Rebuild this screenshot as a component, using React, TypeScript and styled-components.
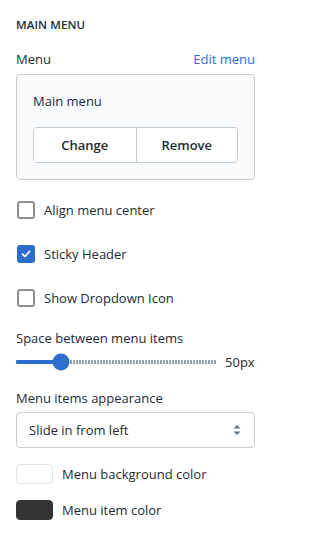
import React, { useState } from "react";
import styled, { createGlobalStyle } from "styled-components";

const GlobalStyle = createGlobalStyle`
  html, body {
    margin: 0;
    padding: 0;
    background: #ffffff;
  }
  body {
    font-family: "Open Sans", "Noto Sans", sans-serif;
    color: #212b36;
    -webkit-font-smoothing: antialiased;
  }
`;

const Panel = styled.div`
  width: 271px;
  box-sizing: border-box;
  padding: 17px 16px 16px;
  display: flex;
  flex-direction: column;
`;

const SectionTitle = styled.h3`
  margin: 0 0 16px;
  font-size: 11.5px;
  font-weight: 600;
  line-height: 16px;
  letter-spacing: 0.1px;
  text-transform: uppercase;
  color: #212b36;
`;

const FieldHeader = styled.div`
  display: flex;
  justify-content: space-between;
  align-items: center;
  height: 20px;
  margin-bottom: 5px;
`;

const Label = styled.span`
  font-size: 13px;
  line-height: 20px;
  color: #212b36;
`;

const LinkButton = styled.a`
  font-size: 13px;
  line-height: 20px;
  color: #2c6ecb;
  text-decoration: none;
  cursor: pointer;
`;

const Card = styled.div`
  background: #f9fafb;
  border: 1px solid #c9cccf;
  border-radius: 4px;
  padding: 16px;
  display: flex;
  flex-direction: column;
  gap: 16px;
`;

const CardTitle = styled.div`
  font-size: 13px;
  line-height: 20px;
`;

const ButtonGroup = styled.div`
  display: grid;
  grid-template-columns: 1fr 1fr;
  border: 1px solid #c4cdd5;
  border-radius: 4px;
  background: #ffffff;
  overflow: hidden;
`;

const GroupButton = styled.button<{ $divider?: boolean }>`
  height: 34px;
  border: 0;
  border-left: ${(p) => (p.$divider ? "1px solid #c4cdd5" : "0")};
  background: #ffffff;
  font-family: inherit;
  font-size: 13px;
  font-weight: 600;
  color: #212b36;
  cursor: pointer;
`;

const Options = styled.div`
  display: flex;
  flex-direction: column;
  gap: 24px;
  margin-top: 20px;
`;

const CheckRow = styled.label`
  display: flex;
  align-items: center;
  gap: 9px;
  height: 20px;
  font-size: 13px;
  cursor: pointer;
`;

const Box = styled.span<{ $checked: boolean }>`
  width: 18px;
  height: 18px;
  box-sizing: border-box;
  margin-left: 1px;
  border-radius: 3px;
  display: flex;
  align-items: center;
  justify-content: center;
  border: ${(p) => (p.$checked ? "0" : "2px solid #8c9196")};
  background: ${(p) => (p.$checked ? "#2c6ecb" : "#ffffff")};
`;

const Field = styled.div`
  display: flex;
  flex-direction: column;
  gap: 4px;
`;

const RangeRow = styled.div`
  display: flex;
  align-items: center;
  height: 20px;
  gap: 9px;
`;

const Track = styled.div`
  position: relative;
  width: 200px;
  height: 4px;
  background: repeating-linear-gradient(
    90deg,
    #919eab 0,
    #919eab 2px,
    transparent 2px,
    transparent 3px
  );
`;

const Fill = styled.div`
  position: absolute;
  left: 0;
  top: 0;
  height: 4px;
  border-radius: 2px;
  background: #2c6ecb;
`;

const Thumb = styled.div`
  position: absolute;
  top: 50%;
  width: 17px;
  height: 17px;
  border-radius: 50%;
  background: #2c6ecb;
  transform: translate(-50%, -50%);
`;

const RangeValue = styled.span`
  font-size: 13px;
  line-height: 20px;
`;

const SelectBox = styled.div`
  height: 36px;
  box-sizing: border-box;
  border: 1px solid #c4cdd5;
  border-radius: 4px;
  padding: 0 12px;
  display: flex;
  align-items: center;
  justify-content: space-between;
  font-size: 13px;
  background: #ffffff;
`;

const ColorRow = styled.div`
  display: flex;
  align-items: center;
  gap: 9px;
  height: 20px;
  font-size: 13px;
`;

const Swatch = styled.span<{ $color: string }>`
  width: 37px;
  height: 20px;
  box-sizing: border-box;
  border-radius: 4px;
  background: ${(p) => p.$color};
  border: 1px solid ${(p) => (p.$color === "#ffffff" ? "#dfe3e8" : p.$color)};
`;

const Colors = styled.div`
  display: flex;
  flex-direction: column;
  gap: 16px;
  margin-top: 16px;
`;

const CheckMark = () => (
  <svg width="12" height="12" viewBox="0 0 12 12">
    <path d="M2.5 6.2 L5 8.5 L9.5 3.5" fill="none" stroke="#fff" strokeWidth="1.8" strokeLinecap="round" strokeLinejoin="round" />
  </svg>
);

const Caret = () => (
  <svg width="10" height="14" viewBox="0 0 10 14">
    <path d="M1.5 5.5 L5 2 L8.5 5.5 Z" fill="#637381" />
    <path d="M1.5 8.5 L5 12 L8.5 8.5 Z" fill="#637381" />
  </svg>
);

const App: React.FC = () => {
  const [checks, setChecks] = useState({ align: false, sticky: true, dropdown: false });
  const spacing = 50;
  const pct = 22.5;

  const toggle = (key: keyof typeof checks) => setChecks({ ...checks, [key]: !checks[key] });

  return (
    <Panel>
      <GlobalStyle />
      <SectionTitle>Main menu</SectionTitle>
      <FieldHeader>
        <Label>Menu</Label>
        <LinkButton>Edit menu</LinkButton>
      </FieldHeader>
      <Card>
        <CardTitle>Main menu</CardTitle>
        <ButtonGroup>
          <GroupButton>Change</GroupButton>
          <GroupButton $divider>Remove</GroupButton>
        </ButtonGroup>
      </Card>
      <Options>
        <CheckRow onClick={() => toggle("align")}>
          <Box $checked={checks.align}>{checks.align && <CheckMark />}</Box>
          Align menu center
        </CheckRow>
        <CheckRow onClick={() => toggle("sticky")}>
          <Box $checked={checks.sticky}>{checks.sticky && <CheckMark />}</Box>
          Sticky Header
        </CheckRow>
        <CheckRow onClick={() => toggle("dropdown")}>
          <Box $checked={checks.dropdown}>{checks.dropdown && <CheckMark />}</Box>
          Show Dropdown Icon
        </CheckRow>
      </Options>
      <Options>
        <Field>
          <Label>Space between menu items</Label>
          <RangeRow>
            <Track>
              <Fill style={{ width: `${pct}%` }} />
              <Thumb style={{ left: `${pct}%` }} />
            </Track>
            <RangeValue>{spacing}px</RangeValue>
          </RangeRow>
        </Field>
      </Options>
      <Colors>
        <Field>
          <Label>Menu items appearance</Label>
          <SelectBox>
            Slide in from left
            <Caret />
          </SelectBox>
        </Field>
        <ColorRow>
          <Swatch $color="#ffffff" />
          Menu background color
        </ColorRow>
        <ColorRow>
          <Swatch $color="#333333" />
          Menu item color
        </ColorRow>
      </Colors>
    </Panel>
  );
};

export default App;
